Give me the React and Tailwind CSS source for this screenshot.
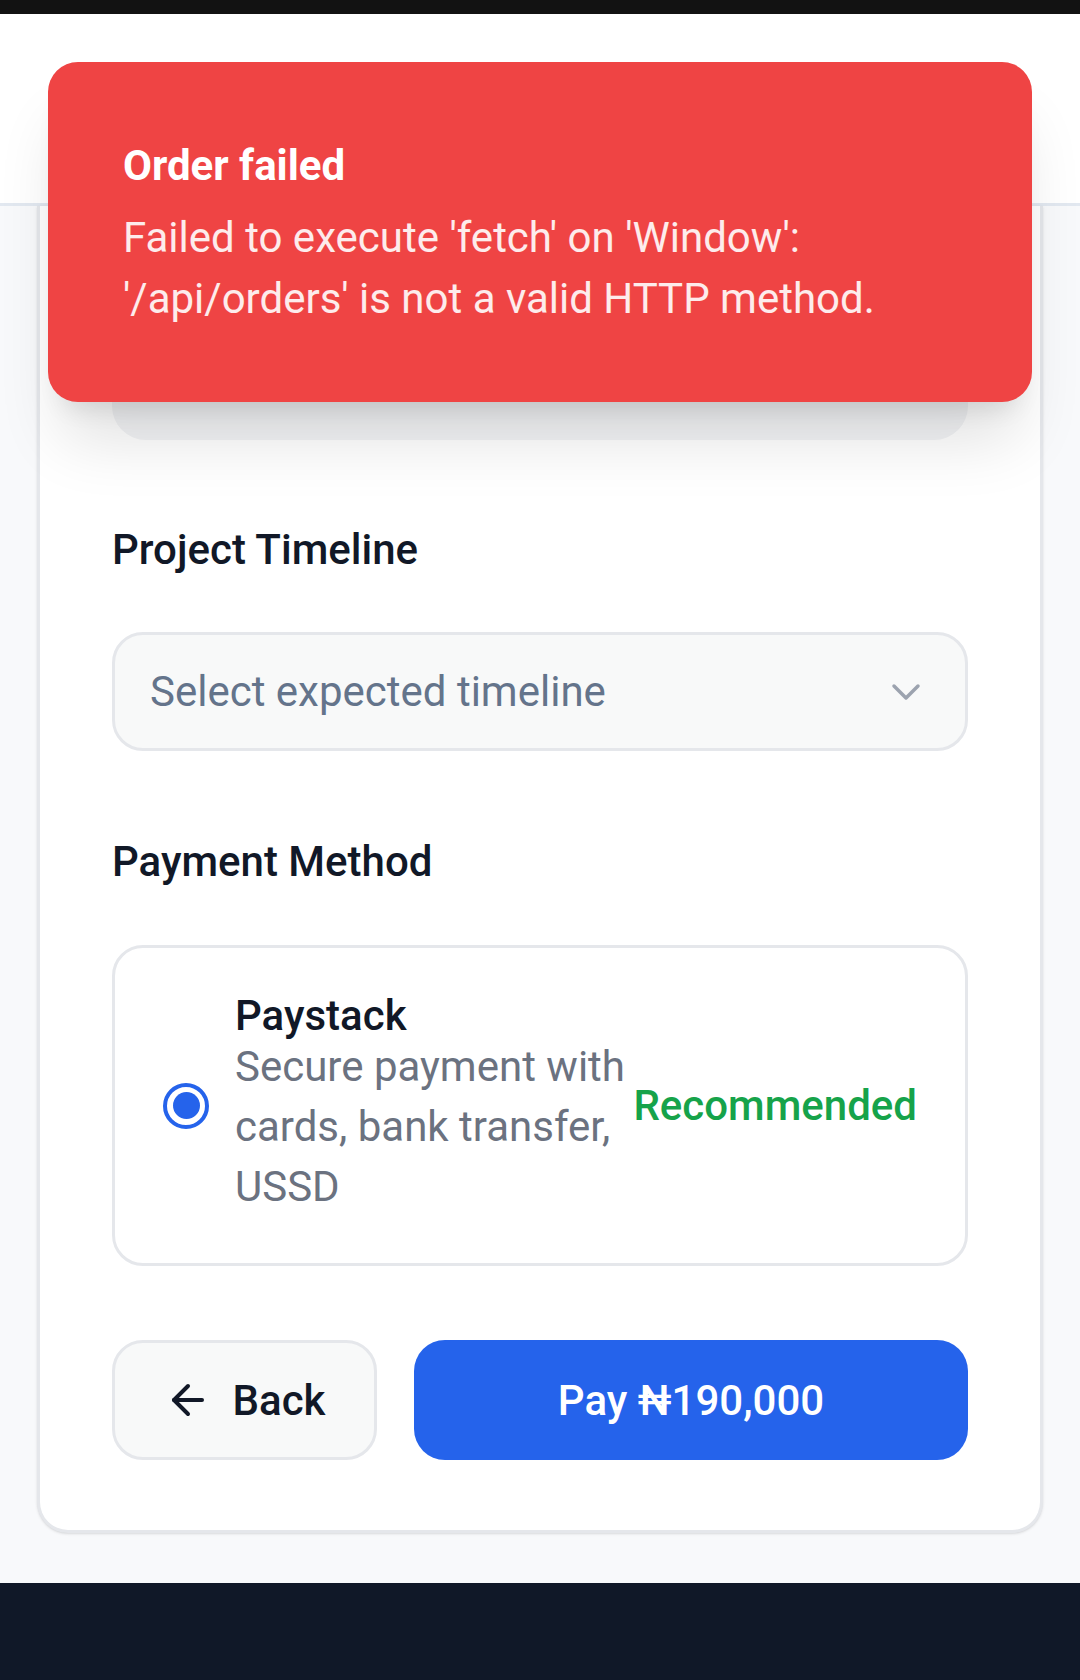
import React from "react";
import { ArrowLeft, ChevronDown } from "lucide-react";

export default function App() {
  return (
    <div className="relative min-h-[1680px] w-[1080px] bg-[#f8f9fb] font-[family-name:Roboto,sans-serif] overflow-hidden">
      <div className="h-[14px] bg-[#121212]" />
      <header className="h-[192px] bg-white border-b-[3px] border-[#e2e8f0]" />

      <main className="px-[37px]">
        <div className="bg-white border-x-[3px] border-b-[3px] border-[#e5e7eb] rounded-b-[31px] px-[72px] pb-[70px] shadow-sm">
          <div className="h-[234px] bg-[#f3f4f6] rounded-b-[34px]" />

          <div className="mt-[78px] text-[42px] leading-[63px] font-medium text-[#111827]">
            Project Timeline
          </div>
          <div className="mt-[51px] h-[119px] border-[3px] border-[#e5e7eb] bg-[#f8f9f9] rounded-[31px] flex items-center justify-between pl-[35px] pr-[35px]">
            <span className="text-[42px] leading-[63px] text-[#64748b]">Select expected timeline</span>
            <ChevronDown size={48} strokeWidth={1.75} className="text-[#9ca3af]" />
          </div>

          <div className="mt-[79px] text-[42px] leading-[63px] font-medium text-[#111827]">
            Payment Method
          </div>
          <div className="mt-[52px] h-[321px] border-[3px] border-[#e5e7eb] bg-white rounded-[31px] flex items-center px-[48px]">
            <div className="w-[46px] h-[46px] rounded-full border-[4px] border-[#2563eb] flex items-center justify-center shrink-0">
              <div className="w-[27px] h-[27px] rounded-full bg-[#2563eb]" />
            </div>
            <div className="ml-[26px] flex-1 min-w-0">
              <div className="text-[42px] leading-[42px] font-medium text-[#111827]">Paystack</div>
              <div className="text-[42px] leading-[60px] text-[#6b7280]">
                Secure payment with cards, bank transfer, USSD
              </div>
            </div>
            <div className="shrink-0 text-[42px] leading-[63px] font-medium text-[#16a34a]">Recommended</div>
          </div>

          <div className="mt-[74px] flex gap-[37px]">
            <button className="w-[265px] h-[120px] shrink-0 border-[3px] border-[#e5e7eb] bg-[#f8f9f9] rounded-[31px] flex items-center justify-center gap-[21px] text-[#111827]">
              <ArrowLeft size={48} strokeWidth={2} />
              <span className="text-[42px] leading-[63px] font-medium">Back</span>
            </button>
            <button className="flex-1 h-[120px] bg-[#2563eb] rounded-[31px] flex items-center justify-center text-white text-[42px] leading-[63px] font-medium">
              Pay ₦190,000
            </button>
          </div>
        </div>
      </main>

      <div className="mt-[50px] h-[97px] bg-[#101828]" />

      <div className="absolute top-[62px] left-[48px] right-[48px] bg-[#ef4444] rounded-[30px] px-[75px] pt-[72px] pb-[73px] shadow-[0_50px_65px_-13px_rgba(0,0,0,0.12),0_20px_26px_-16px_rgba(0,0,0,0.12)]">
        <div className="text-[42px] leading-[63px] font-bold text-white">Order failed</div>
        <div className="mt-[10px] text-[42px] leading-[61px] text-white/90">
          Failed to execute 'fetch' on 'Window': '/api/orders' is not a valid HTTP method.
        </div>
      </div>
    </div>
  );
}
